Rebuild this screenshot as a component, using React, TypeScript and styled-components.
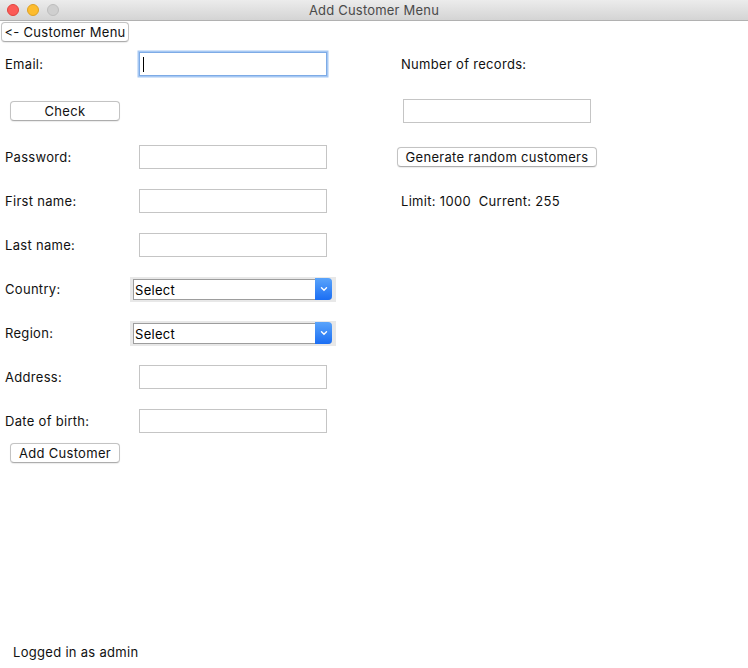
import React from "react";
import styled, { createGlobalStyle } from "styled-components";

const Global = createGlobalStyle`
  html, body { margin: 0; padding: 0; background: #fff; }
  body { font-family: Inter, "Liberation Sans", Arial, sans-serif; font-size: 13px; color: #000; letter-spacing: 0.3px; }
  * { box-sizing: border-box; }
`;

const Window = styled.div`
  width: 748px;
  height: 668px;
  display: flex;
  flex-direction: column;
  background: #fff;
  overflow: hidden;
`;

const TitleBar = styled.div`
  position: relative;
  height: 21px;
  flex: none;
  background: linear-gradient(#ececec, #d4d4d4);
  border-bottom: 1px solid #b1b1b1;
  display: flex;
  align-items: center;
  justify-content: center;
  color: #4a4a4a;
  font-size: 13px;
  letter-spacing: 0.2px;
`;

const Lights = styled.div`
  position: absolute;
  left: 7px;
  top: 4px;
  display: flex;
  gap: 8px;
`;

const Light = styled.span<{ $c: string; $b: string }>`
  width: 12px;
  height: 12px;
  border-radius: 50%;
  background: ${(p) => p.$c};
  border: 0.5px solid ${(p) => p.$b};
`;

const TopRow = styled.div<{ $pl?: number; $pt?: number }>`
  padding: ${(p) => p.$pt ?? 1}px 0 0 ${(p) => p.$pl ?? 1}px;
  height: 21px;
  display: flex;
`;

const Button = styled.button<{ $w?: number }>`
  height: 20px;
  width: ${(p) => (p.$w ? `${p.$w}px` : "auto")};
  padding: 0 2px;
  background: #fff;
  border: 1px solid #c3c3c3;
  border-bottom-color: #adadad;
  border-radius: 4px;
  box-shadow: 0 0.5px 1px rgba(0, 0, 0, 0.08);
  font-family: inherit;
  font-size: 13px;
  letter-spacing: inherit;
  color: #111;
  line-height: 18px;
  white-space: nowrap;
`;

const Form = styled.div`
  display: grid;
  grid-template-columns: 125px 206px 61px 1fr;
  grid-template-rows: 44px 49px 44px 44px 44px 44px 44px 44px 44px;
  padding-left: 5px;
`;

const Cell = styled.div<{ $pl?: number }>`
  display: flex;
  align-items: center;
  padding-left: ${(p) => p.$pl ?? 0}px;
`;

const RightCell = styled(Cell)`
  grid-column: 4;
`;

const Label = styled.span`
  font-size: 13px;
  color: #111;
`;

const Entry = styled.div<{ $focus?: boolean }>`
  position: relative;
  width: 188px;
  height: 24px;
  background: #fff;
  border: 1px solid ${(p) => (p.$focus ? "#7eabe6" : "#c5c5c5")};
  box-shadow: ${(p) => (p.$focus ? "0 0 0 1.5px #a6c8f3" : "none")};
`;

const Caret = styled.span`
  position: absolute;
  left: 3px;
  top: 4px;
  width: 1px;
  height: 15px;
  background: #000;
`;

const SelectWrap = styled.div`
  width: 206px;
  height: 25px;
  background: #e8e8e8;
  padding: 2px 4px 2px 3px;
`;

const SelectBox = styled.div`
  height: 21px;
  display: flex;
  background: #fff;
  border: 1px solid #9d9d9d;
  border-right: none;
  border-radius: 0 4px 4px 0;
`;

const SelectText = styled.span`
  flex: 1;
  padding-left: 1px;
  font-size: 13px;
  line-height: 20px;
  color: #000;
`;

const SelectArrow = styled.span`
  width: 17px;
  margin: -2px 0 -1px;
  background: linear-gradient(#5aa4fb, #1b6ef3);
  border-radius: 0 4px 4px 0;
  display: flex;
  align-items: center;
  justify-content: center;
`;

const Spacer = styled.div`
  flex: 1;
`;

const Footer = styled.div`
  padding: 0 0 8px 13px;
  height: 24px;
  font-size: 13px;
  color: #111;
`;

const Chevron = () => (
  <svg width="8" height="6" viewBox="0 0 8 6">
    <path d="M1.5 1.8 L4 4.2 L6.5 1.8" stroke="#fff" strokeWidth="1.4" fill="none" strokeLinecap="round" />
  </svg>
);

const Select = () => (
  <SelectWrap>
    <SelectBox>
      <SelectText>Select</SelectText>
      <SelectArrow>
        <Chevron />
      </SelectArrow>
    </SelectBox>
  </SelectWrap>
);

const rows: { label: string; kind: "entry" | "select" }[] = [
  { label: "Password:", kind: "entry" },
  { label: "First name:", kind: "entry" },
  { label: "Last name:", kind: "entry" },
  { label: "Country:", kind: "select" },
  { label: "Region:", kind: "select" },
  { label: "Address:", kind: "entry" },
  { label: "Date of birth:", kind: "entry" },
];

export default function App() {
  return (
    <Window>
      <Global />
      <TitleBar>
        <Lights>
          <Light $c="#fc5b57" $b="#e0443e" />
          <Light $c="#fdbc2e" $b="#dea123" />
          <Light $c="#cfcfcf" $b="#bdbdbd" />
        </Lights>
        Add Customer Menu
      </TitleBar>
      <TopRow>
        <Button $w={128}>&lt;- Customer Menu</Button>
      </TopRow>
      <Form>
        <Cell>
          <Label>Email:</Label>
        </Cell>
        <Cell $pl={9}>
          <Entry $focus>
            <Caret />
          </Entry>
        </Cell>
        <Cell />
        <RightCell $pl={4}>
          <Label>Number of records:</Label>
        </RightCell>

        <Cell $pl={5}>
          <Button $w={110}>Check</Button>
        </Cell>
        <Cell />
        <Cell />
        <RightCell $pl={6}>
          <Entry />
        </RightCell>

        {rows.map((r, i) => (
          <React.Fragment key={r.label}>
            <Cell>
              <Label>{r.label}</Label>
            </Cell>
            <Cell $pl={r.kind === "entry" ? 9 : 0}>
              {r.kind === "entry" ? <Entry /> : <Select />}
            </Cell>
            <Cell />
            {i === 0 && (
              <RightCell>
                <Button $w={200}>Generate random customers</Button>
              </RightCell>
            )}
            {i === 1 && (
              <RightCell $pl={4}>
                <Label>Limit: 1000&nbsp;&nbsp;Current: 255</Label>
              </RightCell>
            )}
            {i > 1 && <RightCell />}
          </React.Fragment>
        ))}
      </Form>
      <TopRow $pl={10} $pt={0}>
        <Button $w={110}>Add Customer</Button>
      </TopRow>
      <Spacer />
      <Footer>Logged in as admin</Footer>
    </Window>
  );
}
